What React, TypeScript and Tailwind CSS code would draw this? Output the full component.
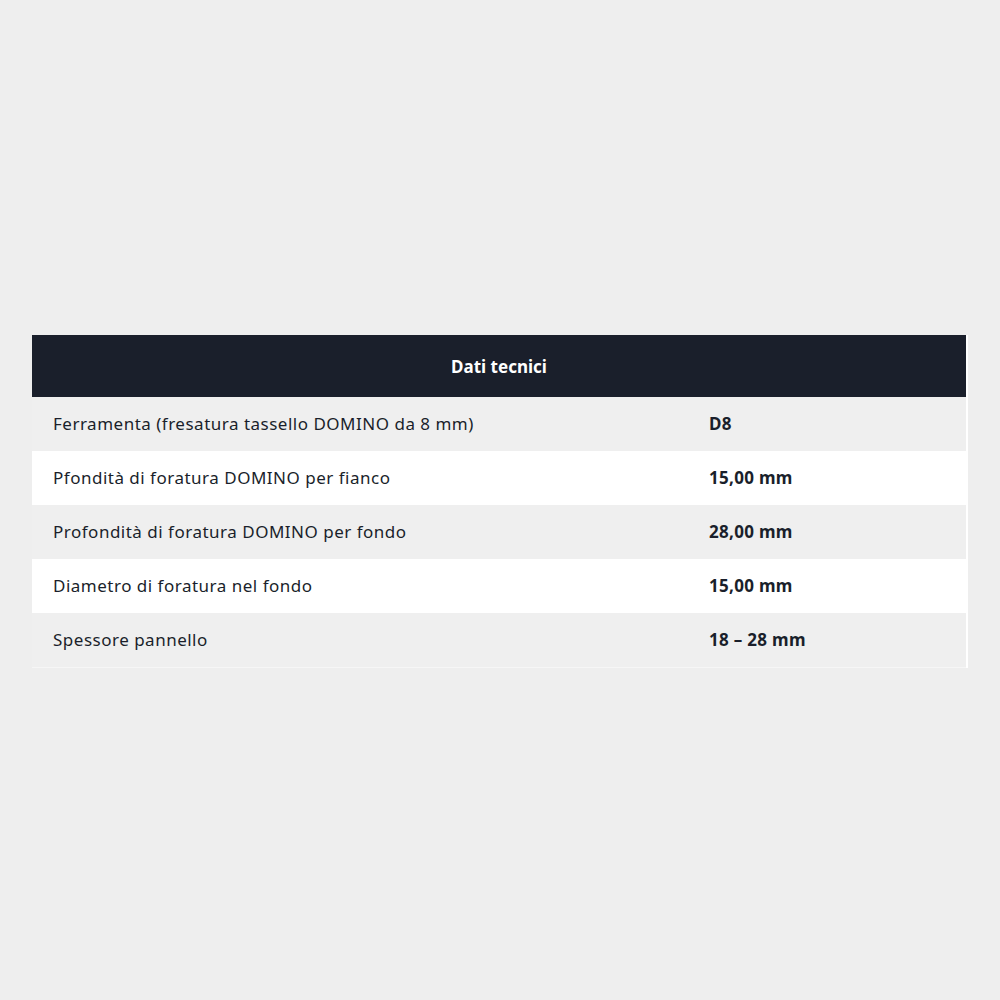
import React from "react";

const rows: [string, string][] = [
  ["Ferramenta (fresatura tassello DOMINO da 8 mm)", "D8"],
  ["Pfondità di foratura DOMINO per fianco", "15,00 mm"],
  ["Profondità di foratura DOMINO per fondo", "28,00 mm"],
  ["Diametro di foratura nel fondo", "15,00 mm"],
  ["Spessore pannello", "18 – 28 mm"],
];

export default function App() {
  return (
    <div
      className="w-[1000px] h-[1000px] bg-[#eeeeee] flex flex-col pt-[335px] px-[32px]"
      style={{ fontFamily: "'Noto Sans', Roboto, sans-serif" }}
    >
      <div className="w-[936px] border-r-2 border-white">
        <div className="h-[62px] bg-[#1a1f2b] flex items-center justify-center text-white font-bold text-[17px] pt-[2px]">
          Dati tecnici
        </div>
        {rows.map(([k, v], i) => (
          <div
            key={k}
            className={`h-[54px] flex items-center text-[17px] text-[#1a1f2b] ${
              i % 2 === 0 ? "bg-[#efefef]" : "bg-white"
            }`}
          >
            <div className="w-[677px] pl-[21px] tracking-[0.5px]">{k}</div>
            <div className="font-bold tracking-[0.3px]">{v}</div>
          </div>
        ))}
        <div className="h-px bg-[#f6f6f6]" />
      </div>
    </div>
  );
}
